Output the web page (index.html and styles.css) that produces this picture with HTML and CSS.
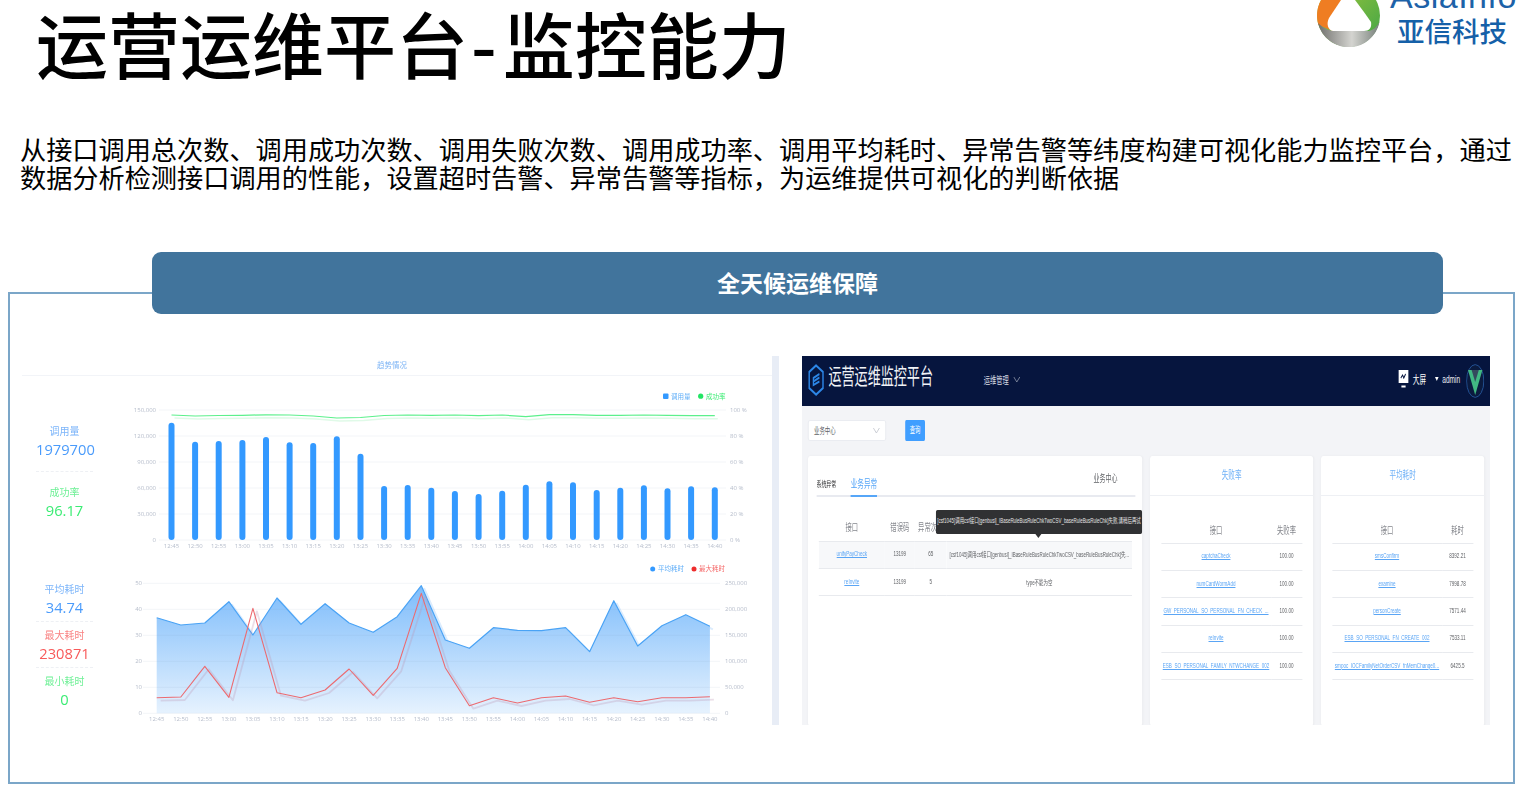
FILE: index.html
```html
<!DOCTYPE html>
<html lang="zh-CN">
<head>
<meta charset="utf-8">
<title>运营运维平台-监控能力</title>
<link rel="stylesheet" href="styles.css">
</head>
<body>
<div class="page">
  <header class="top">
    <h1 class="title">运营运维平台<span class="dash">-</span>监控能力</h1>
    <div class="brand">
      <svg class="brand-mark" width="63" height="47" viewBox="0 0 63 47">
        <defs>
          <linearGradient id="gGreen" x1="0" y1="0" x2="1" y2="1"><stop offset="0" stop-color="#a6c93a"/><stop offset="1" stop-color="#3fa447"/></linearGradient>
          <linearGradient id="gGray" x1="0" y1="0" x2="1" y2="0"><stop offset="0" stop-color="#6f6f6c"/><stop offset=".55" stop-color="#d4d4d0"/><stop offset="1" stop-color="#77807a"/></linearGradient>
        </defs>
        <circle cx="31.5" cy="15.5" r="31.5" fill="url(#gGreen)"/>
        <path d="M31.5 -16 A31.5 31.5 0 0 0 1.5 25 L16 31 L34 0 Z" fill="#ef7d22"/>
        <path d="M1 23 C8 30 14 31 20 31 L52 31 C56 30 59 28 62.5 22 A31.5 31.5 0 0 1 1 23 Z" fill="url(#gGray)"/>
        <path d="M24 0 L38 0 C44 8 50 16 54 22 C55 28 52 31 47 31 L16 31 C11 30 9 24 12 18 C16 12 20 6 24 0 Z" fill="#fff"/>
      </svg>
      <div class="brand-text">
        <div class="brand-en">AsiaInfo</div>
        <div class="brand-cn">亚信科技</div>
      </div>
    </div>
  </header>

  <p class="intro">从接口调用总次数、调用成功次数、调用失败次数、调用成功率、调用平均耗时、异常告警等纬度构建可视化能力监控平台，通过数据分析检测接口调用的性能，设置超时告警、异常告警等指标，为运维提供可视化的判断依据</p>

  <section class="panel">
    <div class="banner">全天候运维保障</div>
    <div class="frame">
      <div class="shot-left">
        <div class="trend">
          <div class="trend-head">趋势情况</div>
          <div class="trend-row trend-row-a">
            <div class="stats stats-loose">
              <div class="stat stat-blue"><div class="stat-label">调用量</div><div class="stat-value">1979700</div></div>
              <div class="stat stat-green"><div class="stat-label">成功率</div><div class="stat-value">96.17</div></div>
            </div>
            <svg class="chart" width="665" height="180" viewBox="107 376 665 180">
              <g class="grid">
                <line x1="159" x2="726" y1="410" y2="410"/><line x1="159" x2="726" y1="436" y2="436"/><line x1="159" x2="726" y1="462" y2="462"/><line x1="159" x2="726" y1="488" y2="488"/><line x1="159" x2="726" y1="514" y2="514"/><line x1="159" x2="726" y1="540" y2="540"/>
              </g>
              <g class="axis axis-end">
                <text x="156" y="412">150,000</text><text x="156" y="438">120,000</text><text x="156" y="464">90,000</text><text x="156" y="490">60,000</text><text x="156" y="516">30,000</text><text x="156" y="542">0</text>
              </g>
              <g class="axis">
                <text x="730" y="412">100 %</text><text x="730" y="438">80 %</text><text x="730" y="464">60 %</text><text x="730" y="490">40 %</text><text x="730" y="516">20 %</text><text x="730" y="542">0 %</text>
              </g>
              <g class="axis axis-mid">
                <text x="171.5" y="548">12:45</text><text x="195.1" y="548">12:50</text><text x="218.7" y="548">12:55</text><text x="242.4" y="548">13:00</text><text x="266" y="548">13:05</text><text x="289.6" y="548">13:10</text><text x="313.2" y="548">13:15</text><text x="336.8" y="548">13:20</text><text x="360.5" y="548">13:25</text><text x="384.1" y="548">13:30</text><text x="407.7" y="548">13:35</text><text x="431.3" y="548">13:40</text><text x="454.9" y="548">13:45</text><text x="478.6" y="548">13:50</text><text x="502.2" y="548">13:55</text><text x="525.8" y="548">14:00</text><text x="549.4" y="548">14:05</text><text x="573" y="548">14:10</text><text x="596.7" y="548">14:15</text><text x="620.3" y="548">14:20</text><text x="643.9" y="548">14:25</text><text x="667.5" y="548">14:30</text><text x="691.1" y="548">14:35</text><text x="714.8" y="548">14:40</text>
              </g>
              <g class="bars">
                <rect x="168.5" y="422.7" width="6" height="117.3" rx="3"/><rect x="192.1" y="441.7" width="6" height="98.3" rx="3"/><rect x="215.7" y="441" width="6" height="99" rx="3"/><rect x="239.4" y="440" width="6" height="100" rx="3"/><rect x="263" y="437" width="6" height="103" rx="3"/><rect x="286.6" y="442.3" width="6" height="97.7" rx="3"/><rect x="310.2" y="443" width="6" height="97" rx="3"/><rect x="333.8" y="436.3" width="6" height="103.7" rx="3"/><rect x="357.5" y="453.7" width="6" height="86.3" rx="3"/><rect x="381.1" y="486" width="6" height="54" rx="3"/><rect x="404.7" y="485" width="6" height="55" rx="3"/><rect x="428.3" y="487.7" width="6" height="52.3" rx="3"/><rect x="451.9" y="491" width="6" height="49" rx="3"/><rect x="475.6" y="494" width="6" height="46" rx="3"/><rect x="499.2" y="490.7" width="6" height="49.3" rx="3"/><rect x="522.8" y="484.7" width="6" height="55.3" rx="3"/><rect x="546.4" y="481.3" width="6" height="58.7" rx="3"/><rect x="570" y="482.3" width="6" height="57.7" rx="3"/><rect x="593.7" y="490" width="6" height="50" rx="3"/><rect x="617.3" y="487.7" width="6" height="52.3" rx="3"/><rect x="640.9" y="485.3" width="6" height="54.7" rx="3"/><rect x="664.5" y="488.3" width="6" height="51.7" rx="3"/><rect x="688.1" y="486.3" width="6" height="53.7" rx="3"/><rect x="711.8" y="487.3" width="6" height="52.7" rx="3"/>
              </g>
              <polyline class="ln ln-green-s" points="174.5,418 198.1,419 221.7,418.5 245.4,418.3 269,417.8 292.6,418 316.2,419 339.8,421 363.5,420.5 387.1,418.5 410.7,418 434.3,418.3 457.9,418 481.6,418.7 505.2,418 528.8,419.7 552.4,417.7 576,417.7 599.7,418.3 623.3,418.3 646.9,418 670.5,418.3 694.1,418.7 717.8,418.7"/>
              <polyline class="ln ln-green" points="171.5,415 195.1,416 218.7,415.5 242.4,415.3 266,414.8 289.6,415 313.2,416 336.8,418 360.5,417.5 384.1,415.5 407.7,415 431.3,415.3 454.9,415 478.6,415.7 502.2,415 525.8,416.7 549.4,414.7 573,414.7 596.7,415.3 620.3,415.3 643.9,415 667.5,415.3 691.1,415.7 714.8,415.7"/>
              <rect class="fill-blue" x="663" y="393.5" width="5.5" height="5.5" rx="1"/>
              <text class="legend legend-blue" x="671" y="398.5">调用量</text>
              <circle class="fill-green" cx="700.7" cy="396.2" r="2.6"/>
              <text class="legend legend-green" x="706" y="398.5">成功率</text>
            </svg>
          </div>
          <div class="trend-row trend-row-b">
            <div class="stats stats-tight">
              <div class="stat stat-blue"><div class="stat-label">平均耗时</div><div class="stat-value">34.74</div></div>
              <div class="stat stat-red"><div class="stat-label">最大耗时</div><div class="stat-value">230871</div></div>
              <div class="stat stat-green"><div class="stat-label">最小耗时</div><div class="stat-value">0</div></div>
            </div>
            <svg class="chart" width="665" height="169" viewBox="107 556 665 169">
              <defs>
                <linearGradient id="gArea" x1="0" y1="0" x2="0" y2="1"><stop offset="0" stop-color="#7dbcfb"/><stop offset="1" stop-color="#e6f2fe"/></linearGradient>
              </defs>
              <polyline class="ln ln-blue-s" points="159.7,620.7 183.8,628 207.8,626 231.9,604.7 255.9,638 280,601 304,627.3 328.1,606.7 352.1,626 376.2,635.3 400.2,619.7 424.3,588.7 448.3,643 472.4,651.3 496.4,630.7 520.5,633.3 544.5,633.7 568.6,630.7 592.6,654.7 616.8,603.7 640.7,649 664.9,628.7 688.8,617.7 712.9,629.3"/>
              <polygon class="area" points="156.7,617.7 180.8,625 204.8,623 228.9,601.7 252.9,635 277,598 301,624.3 325.1,603.7 349.1,623 373.2,632.3 397.2,616.7 421.3,585.7 445.3,640 469.4,648.3 493.4,627.7 517.5,630.3 541.5,630.7 565.6,627.7 589.6,651.7 613.8,600.7 637.7,646 661.9,625.7 685.8,614.7 709.9,626.3 709.9,713.3 156.7,713.3"/>
              <g class="grid grid-over">
                <line x1="143" x2="720" y1="583.3" y2="583.3"/><line x1="143" x2="720" y1="609.3" y2="609.3"/><line x1="143" x2="720" y1="635.3" y2="635.3"/><line x1="143" x2="720" y1="661.3" y2="661.3"/><line x1="143" x2="720" y1="687.3" y2="687.3"/><line x1="143" x2="720" y1="713.3" y2="713.3"/>
              </g>
              <g class="axis axis-end">
                <text x="142" y="585.3">50</text><text x="142" y="611.3">40</text><text x="142" y="637.3">30</text><text x="142" y="663.3">20</text><text x="142" y="689.3">10</text><text x="142" y="715.3">0</text>
              </g>
              <g class="axis">
                <text x="725" y="585.3">250,000</text><text x="725" y="611.3">200,000</text><text x="725" y="637.3">150,000</text><text x="725" y="663.3">100,000</text><text x="725" y="689.3">50,000</text><text x="725" y="715.3">0</text>
              </g>
              <g class="axis axis-mid">
                <text x="156.7" y="721">12:45</text><text x="180.8" y="721">12:50</text><text x="204.8" y="721">12:55</text><text x="228.9" y="721">13:00</text><text x="252.9" y="721">13:05</text><text x="277" y="721">13:10</text><text x="301" y="721">13:15</text><text x="325.1" y="721">13:20</text><text x="349.1" y="721">13:25</text><text x="373.2" y="721">13:30</text><text x="397.2" y="721">13:35</text><text x="421.3" y="721">13:40</text><text x="445.3" y="721">13:45</text><text x="469.4" y="721">13:50</text><text x="493.4" y="721">13:55</text><text x="517.5" y="721">14:00</text><text x="541.5" y="721">14:05</text><text x="565.6" y="721">14:10</text><text x="589.6" y="721">14:15</text><text x="613.8" y="721">14:20</text><text x="637.7" y="721">14:25</text><text x="661.9" y="721">14:30</text><text x="685.8" y="721">14:35</text><text x="709.9" y="721">14:40</text>
              </g>
              <polyline class="ln ln-blue" points="156.7,617.7 180.8,625 204.8,623 228.9,601.7 252.9,635 277,598 301,624.3 325.1,603.7 349.1,623 373.2,632.3 397.2,616.7 421.3,585.7 445.3,640 469.4,648.3 493.4,627.7 517.5,630.3 541.5,630.7 565.6,627.7 589.6,651.7 613.8,600.7 637.7,646 661.9,625.7 685.8,614.7 709.9,626.3"/>
              <polyline class="ln ln-red-s" points="160.7,700.7 184.8,700 208.8,669.3 232.9,700.3 256.9,611.3 281,695.7 305,700.7 329.1,693 353.1,672 377.2,698.3 401.2,671.3 425.3,596.3 449.3,670.7 473.4,708.7 497.4,700.7 521.5,706 545.5,700.7 569.6,699 593.6,705.3 617.8,700.7 641.7,704.7 665.9,700.7 689.8,700.7 713.9,699.7"/>
              <polyline class="ln ln-red" points="156.7,697.7 180.8,697 204.8,666.3 228.9,697.3 252.9,608.3 277,692.7 301,697.7 325.1,690 349.1,669 373.2,695.3 397.2,668.3 421.3,593.3 445.3,667.7 469.4,705.7 493.4,697.7 517.5,703 541.5,697.7 565.6,696 589.6,702.3 613.8,697.7 637.7,701.7 661.9,697.7 685.8,697.7 709.9,696.7"/>
              <circle class="fill-blue" cx="652.7" cy="569" r="2.5"/>
              <text class="legend legend-blue" x="658" y="571.3">平均耗时</text>
              <circle class="fill-red" cx="694" cy="569" r="2.5"/>
              <text class="legend legend-red" x="699" y="571.3">最大耗时</text>
            </svg>
          </div>
        </div>
        <div class="scroll-strip"></div>
      </div>

      <div class="shot-right">
        <div class="app">
          <div class="app-bar">
            <svg class="app-logo" width="27" height="32" viewBox="0 0 27 32">
              <path d="M13.5 1.5 L25 8 V24 L13.5 30.5 L2 24 V8 Z" fill="none" stroke="#2c86e6" stroke-width="2.4"/>
              <path d="M19 10 L9 14 V21 L19 17.5 M9 17.5 L19 13.5" fill="none" stroke="#2c86e6" stroke-width="2.2"/>
            </svg>
            <div class="app-name">运营运维监控平台</div>
            <div class="app-menu">运维管理
              <svg class="chev" width="12" height="7" viewBox="0 0 12 7"><path d="M1 1 L6 6 L11 1" fill="none" stroke="#8d95aa" stroke-width="1"/></svg>
            </div>
            <div class="app-user">
              <svg class="screen" width="17" height="18" viewBox="0 0 17 18">
                <rect x="0" y="0" width="17" height="13" fill="#fff"/>
                <rect x="5" y="15.5" width="7" height="2" fill="#fff"/>
                <path d="M4 8 L7 5 L9 8 L12 4" fill="none" stroke="#06153e" stroke-width="1.4"/>
              </svg>
              <span class="big">大屏</span>
              <span class="caret"></span>
              <span class="admin">admin</span>
              <svg class="avatar" width="30" height="34" viewBox="0 0 30 34" preserveAspectRatio="none">
                <ellipse cx="15" cy="17" rx="14.4" ry="16.4" fill="#0b1b3f" stroke="#2a5fa8" stroke-width="1"/>
                <path d="M3 6 H27 L15 31 Z" fill="#41b883"/>
                <path d="M9 6 H21 L15 18 Z" fill="#34495e"/>
              </svg>
            </div>
          </div>

          <div class="filters">
            <div class="select">业务中心
              <svg class="chev" width="12" height="7" viewBox="0 0 12 7"><path d="M1 1 L6 6 L11 1" fill="none" stroke="#c0c4cc" stroke-width="1"/></svg>
            </div>
            <div class="query">查询</div>
          </div>

          <div class="cards">
            <div class="card card-main">
              <div class="tabs">
                <span class="tab">系统异常</span>
                <span class="tab tab-on">业务异常</span>
                <span class="tab-right">业务中心</span>
              </div>
              <table class="tbl tbl-main">
                <colgroup><col class="c-a"><col class="c-b"><col class="c-c"><col class="c-d"></colgroup>
                <thead><tr><th>接口</th><th>错误码</th><th>异常次数</th><th>详情</th></tr></thead>
                <tbody>
                  <tr class="hover"><td><a>unifyPayCheck</a></td><td>13199</td><td>65</td><td>[csf1045]调用csf接口[genbusi]_IBaseRuleBusRuleChkTwoCSV_baseRuleBusRuleChk]失...</td></tr>
                  <tr><td><a>reInvite</a></td><td>13199</td><td>5</td><td>type不能为空</td></tr>
                </tbody>
              </table>
              <div class="tooltip">[csf1045]调用csf接口[genbusi]_IBaseRuleBusRuleChkTwoCSV_baseRuleBusRuleChk]失败,请稍后再试</div>
            </div>

            <div class="card">
              <div class="card-title">失败率</div>
              <table class="tbl tbl-side">
                <colgroup><col class="c-name"><col class="c-val"></colgroup>
                <thead><tr><th>接口</th><th>失败率</th></tr></thead>
                <tbody>
                  <tr><td><a>captchaCheck</a></td><td>100.00</td></tr>
                  <tr><td><a>numCardWormAdd</a></td><td>100.00</td></tr>
                  <tr><td><a>GW_PERSONAL_SO_PERSONAL_FN_CHECK_...</a></td><td>100.00</td></tr>
                  <tr><td><a>reInvite</a></td><td>100.00</td></tr>
                  <tr><td><a>ESB_SO_PERSONAL_FAMILY_NTWCHANGE_002</a></td><td>100.00</td></tr>
                </tbody>
              </table>
            </div>

            <div class="card">
              <div class="card-title">平均耗时</div>
              <table class="tbl tbl-side">
                <colgroup><col class="c-name"><col class="c-val"></colgroup>
                <thead><tr><th>接口</th><th>耗时</th></tr></thead>
                <tbody>
                  <tr><td><a>smsConfirm</a></td><td>8392.21</td></tr>
                  <tr><td><a>examine</a></td><td>7998.78</td></tr>
                  <tr><td><a>personCreate</a></td><td>7571.44</td></tr>
                  <tr><td><a>ESB_SO_PERSONAL_FN_CREATE_002</a></td><td>7533.11</td></tr>
                  <tr><td><a>smpoc_IOCFamilyNetOrderCSV_fnMemChange0...</a></td><td>6425.5</td></tr>
                </tbody>
              </table>
            </div>
          </div>
        </div>
      </div>
    </div>
  </section>
</div>
</body>
</html>
```

FILE: styles.css
```css
* { box-sizing: border-box; }
html, body { margin: 0; padding: 0; background: #fff; }
body { font-family: "Noto Sans CJK SC", "Noto Sans", sans-serif; color: #000; }

.page { width: 1522px; height: 789px; overflow: hidden; }

/* heading */
.top { display: flex; justify-content: space-between; align-items: flex-start; height: 135px; }
.title {
  margin: 0;
  padding: 0 0 0 36px;
  font-size: 72px;
  line-height: 84px;
  font-weight: 500;
  white-space: nowrap;
}
.dash { margin: 0 6px 0 3px; }
.brand { display: flex; align-items: flex-start; width: 205px; gap: 10px; }
.brand-mark { flex: none; display: block; }
.brand-text { margin-top: -22px; }
.brand-en {
  font-family: "Liberation Sans", sans-serif;
  font-size: 34px;
  line-height: 36px;
  color: #1d62a8;
  letter-spacing: .5px;
  white-space: nowrap;
}
.brand-cn {
  margin-left: 7px;
  font-size: 27.5px;
  line-height: 32px;
  font-weight: 500;
  color: #1560a8;
  white-space: nowrap;
}

.intro {
  margin: 0;
  padding-left: 20px;
  width: 1516px;
  height: 117px;
  font-size: 26.18px;
  line-height: 28px;
  color: #000;
}

/* frame */
.panel { position: relative; }
.banner {
  position: relative;
  z-index: 1;
  margin-left: 152px;
  width: 1291px;
  height: 62px;
  border-radius: 9px;
  background: #41749c;
  color: #fff;
  font-size: 23px;
  font-weight: 700;
  line-height: 60px;
  text-align: center;
}
.frame {
  display: flex;
  gap: 23px;
  margin: -22px 0 0 8px;
  width: 1507px;
  height: 492px;
  padding: 62px 0 0 12px;
  border: 2px solid #7ba6c8;
}

/* left picture */
.shot-left { display: flex; width: 757px; height: 369px; flex: none; filter: blur(.35px); font-family: "Open Sans", "Noto Sans CJK SC", sans-serif; }
.trend { width: 750px; flex: none; }
.scroll-strip { width: 7px; background: #e8edf6; }
.trend-head {
  height: 20px;
  border-bottom: 1px solid #f2f4f8;
  font-size: 7.5px;
  line-height: 18px;
  text-align: center;
  color: #7db4f5;
  padding-right: 10px;
}
.trend-row { display: flex; }
.trend-row-a { height: 180px; }
.trend-row-b { height: 169px; }
.stats { width: 85px; flex: none; padding: 0 14px; text-align: center; }
.stats-loose { padding-top: 48px; }
.stats-tight { padding-top: 25.7px; }
.stat-label { font-size: 10px; line-height: 14px; margin-bottom: 1px; }
.stat-value { font-size: 14.7px; line-height: 20px; }
.stats-loose .stat { padding-bottom: 12px; margin-bottom: 13px; border-bottom: 1px dashed #eef0f4; }
.stats-tight .stat { padding-bottom: 4px; margin-bottom: 6px; border-bottom: 1px dashed #eef0f4; }
.stat:last-child { border-bottom: 0; }
.stat-blue .stat-label { color: #7cb5fa; }
.stat-blue .stat-value { color: #4a9bfb; }
.stat-green .stat-label { color: #6ef096; }
.stat-green .stat-value { color: #3bec74; }
.stat-red .stat-label { color: #f98282; }
.stat-red .stat-value { color: #f85a5a; }

.chart { display: block; flex: none; }
.grid line { stroke: #f3f5f8; stroke-width: 1; }
.grid-over line { stroke: rgba(120, 140, 170, .09); }
.axis text { font-size: 6px; fill: #b6bdcb; }
.axis-end text { text-anchor: end; }
.axis-mid text { text-anchor: middle; }
.bars rect { fill: #3399ff; }
.ln { fill: none; stroke-linejoin: round; }
.ln-green { stroke: #5cf08c; stroke-width: 1.2; }
.ln-green-s { stroke: #e0fae8; stroke-width: 1.6; }
.ln-blue { stroke: #4aa3f5; stroke-width: 1.2; }
.ln-blue-s { stroke: #dcecfd; stroke-width: 2; }
.ln-red { stroke: #ec6a70; stroke-width: 1.1; }
.ln-red-s { stroke: rgba(190, 150, 180, .3); stroke-width: 1.8; }
.area { fill: url(#gArea); }
.legend { font-size: 6.5px; }
.legend-blue { fill: #60aef8; }
.legend-green { fill: #3bec74; }
.legend-red { fill: #f56a6a; }
.fill-blue { fill: #3399ff; }
.fill-green { fill: #22e564; }
.fill-red { fill: #ee2c2c; }

/* right picture: a wide app squeezed to 60% of its width */
.shot-right { width: 688px; height: 369px; flex: none; overflow: hidden; background: #f3f4f7; filter: blur(.25px); }
.app {
  width: 1146.67px;
  height: 369px;
  transform: scaleX(.6);
  transform-origin: 0 0;
  font-family: "Liberation Sans", "Noto Sans CJK SC", sans-serif;
  color: #606266;
}
.app-bar { display: flex; align-items: center; height: 50px; background: #06153e; padding-left: 10px; color: #fff; }
.app-logo { flex: none; margin-top: -2px; }
.app-name { margin: 0 0 8px 7px; width: 259px; font-size: 21.8px; line-height: 30px; color: #f0f2f6; white-space: nowrap; }
.app-menu { display: flex; align-items: center; gap: 7px; width: 120px; margin-top: -3px; font-size: 10.4px; color: #d5d9e2; white-space: nowrap; }
.app-user { display: flex; align-items: center; margin-left: auto; margin-top: -4px; padding-right: 9.67px; font-size: 11px; }
.screen { display: block; margin-right: 7px; }
.big { color: #fff; font-size: 11px; margin-right: 15px; }
.caret { width: 0; height: 0; margin-right: 6px; border: 3px solid transparent; border-top: 4px solid #fff; border-bottom: 0; }
.admin { margin-right: 10px; font-size: 11px; color: #e8eaf0; }
.avatar { display: block; margin-top: 4px; }

.filters { display: flex; align-items: stretch; height: 21px; margin: 14px 0 0 10px; }
.select {
  display: flex; align-items: center; justify-content: space-between;
  width: 130px; padding: 0 9px;
  background: #fff; border: 1px solid #e6e8ee; border-radius: 3px;
  font-size: 9px; color: #606266;
}
.query {
  width: 33px; margin-left: 32px;
  background: #409eff; border-radius: 2px;
  color: #fff; font-size: 9px; line-height: 21px; text-align: center;
}

.cards { display: flex; gap: 13px; margin: 15px 0 0 10px; align-items: stretch; height: 270px; }
.card { position: relative; width: 272px; flex: none; background: #fff; border-radius: 4px; box-shadow: 0 0 3px rgba(0, 0, 0, .05); }
.card-main { width: 557px; }
.card-title {
  height: 39.5px;
  border-bottom: 1px solid #eef0f4;
  font-size: 11px;
  line-height: 38px;
  text-align: center;
  color: #6fb1f7;
}
.tabs { position: relative; display: flex; align-items: flex-end; gap: 24px; height: 41px; margin: 0 11px 0 14px; border-bottom: 2px solid #e8eaf0; }
.tab { padding-bottom: 5px; font-size: 8.3px; line-height: 12px; color: #303133; }
.tab-on { padding-bottom: 2px; font-size: 11px; line-height: 18px; color: #56a6f8; border-bottom: 2px solid #56a6f8; margin-bottom: -2px; }
.tab-right { margin-left: auto; margin-right: 30px; padding-bottom: 9px; font-size: 10px; line-height: 14px; color: #606266; }

.tbl { table-layout: fixed; border-collapse: collapse; }
.tbl th { height: 41px; padding: 13px 0 0; font-size: 10.5px; font-weight: 400; color: #85878d; text-align: center; white-space: nowrap; overflow: hidden; }
.tbl td { height: 27.4px; padding: 0 0 2px; border-top: 1px solid #e8eaee; font-size: 7.6px; color: #606266; text-align: center; white-space: nowrap; overflow: hidden; }
.tbl tbody tr:last-child td { border-bottom: 1px solid #e8eaee; }
.tbl a { color: #5aa5f5; text-decoration: underline; }
.tbl-main { width: 522px; margin: 3px 0 0 18px; }
.tbl-side { width: 235px; margin: 3px 0 0 18.5px; }
.tbl-side th { height: 44.5px; padding-top: 17px; }
.tbl-main td:last-child { font-size: 7.4px; }
.c-a { width: 110px; }
.c-b { width: 50px; }
.c-c { width: 53px; }
.c-d { width: 309px; }
.c-name { width: 183px; }
.c-val { width: 52px; }
.hover td { background: #f7f8fa; }

.tooltip {
  position: absolute;
  left: 213px;
  top: 54px;
  width: 344px;
  height: 24px;
  padding-bottom: 2px;
  border-radius: 3px;
  background: #303133;
  color: #e6e6e6;
  font-size: 7.4px;
  line-height: 22px;
  text-align: center;
  white-space: nowrap;
}
.tooltip::after {
  content: "";
  position: absolute;
  left: 166px;
  top: 24px;
  border: 5px solid transparent;
  border-top: 4px solid #303133;
  border-bottom: 0;
}
```
